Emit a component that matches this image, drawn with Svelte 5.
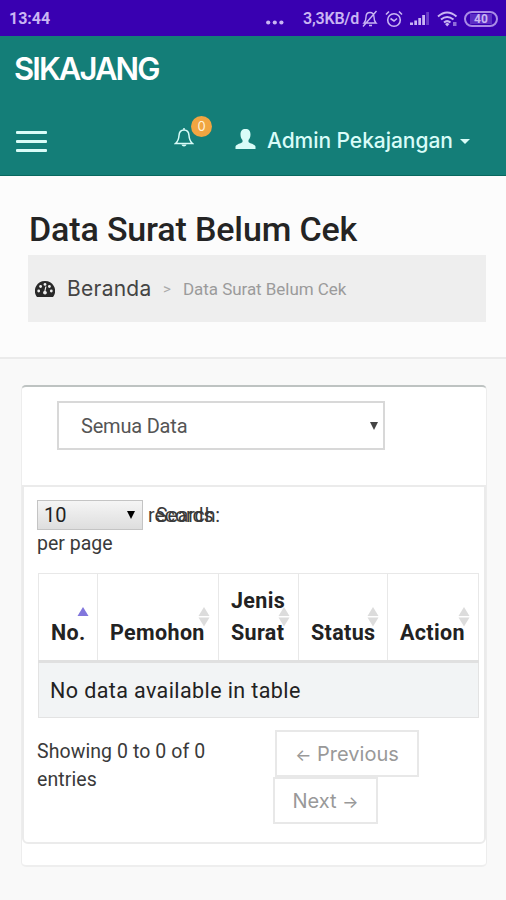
<script lang="ts">
  type Column = { label: string; width: number; sorted?: boolean };

  const columns: Column[] = [
    { label: 'No.', width: 59, sorted: true },
    { label: 'Pemohon', width: 121 },
    { label: 'Jenis Surat', width: 80 },
    { label: 'Status', width: 89 },
    { label: 'Action', width: 91 }
  ];
</script>

<div class="screen">
  <div class="status-bar">
    <span class="clock">13:44</span>
    <svg class="more" width="18" height="5" viewBox="0 0 18 5" fill="currentColor">
      <circle cx="2.2" cy="2.5" r="2.1" /><circle cx="8.8" cy="2.5" r="2.1" /><circle cx="15.4" cy="2.5" r="2.1" />
    </svg>
    <span class="rate">3,3KB/d</span>
    <svg class="muted" width="16" height="18" viewBox="0 0 16 18" fill="none" stroke="currentColor" stroke-width="1.4">
      <path d="M2 13h12c-2-2-2-4-2-6 0-3-1.500-4.500-4-4.500S4 4 4 7c0 2 0 4-2 6zM7 15.500h3M1 16.500 14.500 1" />
    </svg>
    <svg class="alarm" width="18" height="18" viewBox="0 0 18 18" fill="none" stroke="currentColor" stroke-width="1.6">
      <circle cx="9" cy="10" r="6.300" /><path d="M5.500 8.500 9 11l3-2.500M1 4.500 4 1.500M17 4.500l-3-3" />
    </svg>
    <svg class="signal" width="19" height="14" viewBox="0 0 19 14" fill="currentColor">
      <path d="M0 10.500h3V13H0zM4.300 8.500H7V13H4.300zM8.300 6H11v7H8.300zM12.200 3H15v10h-2.800z" />
      <path d="M16.200 0H19v13h-2.800z" opacity=".35" />
    </svg>
    <svg class="wifi" width="21" height="16" viewBox="0 0 21 16" fill="none" stroke="currentColor" stroke-width="2">
      <path d="M1 5.500Q10-2.500 19.500 5.500M4 8.500q6-5 12.500 0M7 11.500q3-2.700 6.500 0" />
      <path d="m8 13 2.200-1.200L12.500 13l-2.300 2.500z" fill="currentColor" stroke="none" />
      <path d="M16 11h3.500v4H16z" fill="currentColor" stroke="none" opacity=".6" />
    </svg>
    <span class="battery"><span>40</span></span>
  </div>

  <header class="app-header">
    <div class="brand">SIKAJANG</div>
    <nav class="navbar">
      <button class="menu" type="button" aria-label="Menu"><i></i><i></i><i></i></button>
      <button class="bell" type="button" aria-label="Notifikasi">
        <svg width="20" height="21" viewBox="0 0 20 21" fill="none" stroke="currentColor" stroke-width="1.500">
          <path d="M10 1v2M1.500 16.500h17C15.500 14 15.200 11.500 15 8.500 14.800 5 13.200 3 10 3S5.200 5 5 8.500c-.2 3-.5 5.500-3.500 8z" />
          <path d="M7.500 17.500h5c-.4 2.500-4.600 2.500-5 0z" fill="currentColor" stroke="none" />
        </svg>
        <span class="badge">0</span>
      </button>
      <svg class="user" width="21" height="21" viewBox="0 0 21 21" fill="currentColor">
        <path d="M10.500 0c3.500 0 5 2 5 5.500 0 2.300-.8 4.300-2 5.500v2c1 1.300 6.500 2.200 7 4.500V20H.5v-2.500C1 15.200 6.500 14.300 7.500 13v-2c-1.200-1.200-2-3.200-2-5.500 0-3.500 1.500-5.500 5-5.500z" />
      </svg>
      <span class="account">Admin Pekajangan</span>
      <span class="caret"></span>
    </nav>
  </header>

  <section class="page-head">
    <h1>Data Surat Belum Cek</h1>
    <div class="breadcrumb">
      <svg width="20" height="16" viewBox="0 0 20 16">
        <path d="M10 0a10 10 0 0 0-8.600 15.200l.7.800h15.800l.7-.8A10 10 0 0 0 10 0z" fill="#292929" />
        <g fill="#eee">
          <circle cx="3.700" cy="10" r="1.400" /><circle cx="5.600" cy="5.500" r="1.400" />
          <circle cx="10" cy="3.400" r="1.400" /><circle cx="14.400" cy="5.500" r="1.400" /><circle cx="16.300" cy="10" r="1.400" />
          <path d="m11.500 5.500-1 4.500c1.800.6 2 3.200-.4 3.400-2.400-.1-2.600-2.800-.8-3.500l1-4.500z" />
        </g>
      </svg>
      <a href="#beranda">Beranda</a>
      <span class="divider">&gt;</span>
      <span class="current">Data Surat Belum Cek</span>
    </div>
  </section>

  <main class="box">
    <div class="filter">
      <div class="select select-large"><span>Semua Data</span><i class="arrow"></i></div>
    </div>

    <div class="panel">
      <div class="table-tools">
        <div class="length">
          <div class="select select-small"><span>10</span><i class="arrow"></i></div>
          <span class="records">records<b class="search">Search:</b></span>
        </div>
        <div class="per-page">per page</div>
      </div>

      <table>
        <colgroup>
          {#each columns as column}
            <col style={`width: ${column.width}px`} />
          {/each}
        </colgroup>
        <thead>
          <tr>
            {#each columns as column}
              <th>
                <svg class="sort" class:sorted={column.sorted} width="12" height="20" viewBox="0 0 12 20">
                  <path d="M6 0l5.500 9H.5z" />
                  {#if !column.sorted}<path d="M.5 10.500h11L6 19.500z" />{/if}
                </svg>
                <span class="label">{column.label}</span>
              </th>
            {/each}
          </tr>
        </thead>
        <tbody>
          <tr><td colspan="5">No data available in table</td></tr>
        </tbody>
      </table>

      <div class="table-foot">
        <div class="info">Showing 0 to 0 of 0 entries</div>
        <div class="pager">
          <button class="previous" type="button"><span class="glyph">←</span> Previous</button>
          <button class="next" type="button">Next <span class="glyph">→</span></button>
        </div>
      </div>
    </div>
  </main>
</div>

<style>
  :global(body) {
    margin: 0;
    background: #f9f9f9;
  }

  .screen {
    width: 506px;
    height: 900px;
    overflow: hidden;
    background: #f9f9f9;
    color: #3a3a3a;
    font-family: Roboto, sans-serif;
  }

  .screen * {
    box-sizing: border-box;
  }

  button {
    padding: 0;
    border: 0;
    background: none;
    color: inherit;
    font: inherit;
  }

  svg {
    display: block;
    flex: none;
  }

  .status-bar {
    display: flex;
    align-items: center;
    height: 36px;
    padding: 1px 8px 0 9px;
    background: #3900b1;
    color: #c9b5f3;
    font-size: 16px;
    font-weight: 700;
  }

  .clock {
    flex: none;
    width: 257px;
  }

  .more {
    margin-top: 7px;
  }

  .rate {
    flex: none;
    width: 56px;
    margin-left: 19px;
    font-weight: 600;
    letter-spacing: -0.2px;
    white-space: nowrap;
  }

  .muted {
    margin-left: 3px;
  }

  .alarm {
    margin-left: 7px;
  }

  .signal {
    margin-left: 7px;
  }

  .wifi {
    margin-left: 8px;
  }

  .battery {
    display: flex;
    flex: none;
    align-items: center;
    justify-content: center;
    width: 34px;
    height: 16px;
    margin-left: 6px;
    border: 2px solid #a98be6;
    border-radius: 8px;
    font-size: 12px;
  }

  .battery span {
    padding: 0 4px;
    background: #5c2dc4;
    line-height: 10px;
  }

  .app-header {
    height: 140px;
    border-bottom: 1px solid #08685f;
    background: #147e78;
    color: #d9fcf8;
  }

  .brand {
    height: 69px;
    padding: 14px 0 0 14px;
    color: #fff;
    font-family: Inter, sans-serif;
    font-size: 31px;
    font-weight: 600;
    line-height: 37px;
    letter-spacing: -1.9px;
  }

  .navbar {
    display: flex;
    align-items: center;
    height: 70px;
    padding-left: 16px;
  }

  .menu {
    display: grid;
    gap: 6px;
    width: 31px;
    margin-top: 2px;
  }

  .menu i {
    height: 3px;
    border-radius: 1px;
    background: #d9fcf8;
  }

  .bell {
    position: relative;
    margin: -6px 0 0 127px;
  }

  .badge {
    position: absolute;
    top: -11px;
    left: 17px;
    width: 21px;
    height: 21px;
    border-radius: 50%;
    background: #f1a541;
    color: #fff2d6;
    font-family: Inter, sans-serif;
    font-size: 13px;
    line-height: 21px;
  }

  .user {
    margin: -1px 0 0 41px;
  }

  .account {
    width: 186px;
    margin-left: 11px;
    font-family: Inter, sans-serif;
    font-size: 21px;
    font-weight: 500;
    letter-spacing: -0.05px;
    white-space: nowrap;
  }

  .caret {
    margin: 2px 0 0 7px;
    border: 5px solid transparent;
    border-top-color: #d9fcf8;
    border-bottom: 0;
  }

  .page-head {
    height: 183px;
    padding: 32px 20px 0 28px;
    border-bottom: 2px solid #ebebeb;
    background: #fcfcfc;
  }

  h1 {
    margin: 0 0 4px 1px;
    color: #242424;
    font-size: 34px;
    font-weight: 500;
    line-height: 43px;
    letter-spacing: -0.15px;
    white-space: nowrap;
  }

  .breadcrumb {
    display: flex;
    align-items: center;
    height: 67px;
    padding-left: 7px;
    background: #eee;
  }

  .breadcrumb a {
    width: 85px;
    margin-left: 12px;
    color: #444;
    font-family: Inter, sans-serif;
    font-size: 21px;
    letter-spacing: 0.25px;
    text-decoration: none;
  }

  .divider {
    width: 19px;
    margin-left: 11px;
    color: #aaa;
    font-size: 15px;
  }

  .current {
    margin-left: 1px;
    color: #9b9b9b;
    font-size: 17px;
    letter-spacing: -0.05px;
    white-space: nowrap;
  }

  .box {
    width: 466px;
    height: 482px;
    margin: 26px 0 0 21px;
    border: 1px solid #ededed;
    border-top: 2px solid #bec3c2;
    border-bottom: 2px solid #eee;
    border-radius: 5px;
    background: #fff;
  }

  .filter {
    height: 98px;
    padding: 14px 0 0 35px;
  }

  .select {
    display: flex;
    align-items: center;
    justify-content: space-between;
    border: 2px solid #d8d8d8;
  }

  .select-large {
    width: 328px;
    height: 49px;
    padding: 0 5px 0 22px;
    color: #555;
    font-size: 20px;
    letter-spacing: -0.2px;
  }

  .arrow {
    border: 4.500px solid transparent;
    border-top: 8px solid #444;
    border-bottom: 0;
  }

  .panel {
    height: 359px;
    padding: 13px 6px 0 14px;
    border: 2px solid #ebebeb;
    border-radius: 0 0 6px 6px;
  }

  .table-tools {
    height: 73px;
    font-size: 19.500px;
  }

  .length {
    display: flex;
    align-items: center;
    height: 30px;
    margin-left: -1px;
  }

  .select-small {
    width: 106px;
    height: 30px;
    padding: 0 7px 0 6px;
    border: 1px solid #c4c4c4;
    background: linear-gradient(#f5f5f5, #dedede);
    color: #222;
    font-size: 20px;
  }

  .select-small .arrow {
    border-top-color: #000;
  }

  .records {
    position: relative;
    margin-left: 5px;
  }

  .search {
    position: absolute;
    top: 0;
    left: 8px;
    font-weight: 400;
    letter-spacing: -0.1px;
  }

  .per-page {
    margin: 1px 0 0 -1px;
    line-height: 26px;
  }

  table {
    width: 440px;
    border: 1px solid #e3e3e3;
    border-collapse: collapse;
    table-layout: fixed;
    color: #222;
    font-size: 21.500px;
  }

  th {
    position: relative;
    height: 88px;
    padding: 11px 6px 11px 12px;
    border: 1px solid #e8e8e8;
    border-bottom: 3px solid #e0e0e0;
    font-weight: 700;
    line-height: 32px;
    text-align: left;
    vertical-align: bottom;
  }

  .label {
    position: relative;
    letter-spacing: 0.35px;
  }

  .sort {
    position: absolute;
    top: 33px;
    right: 8px;
    fill: #dcdcdc;
  }

  .sort.sorted {
    fill: #8176dc;
  }

  td {
    height: 56px;
    padding: 0 11px;
    background: #f2f4f5;
    letter-spacing: 0.4px;
  }

  .table-foot {
    display: flex;
    padding-top: 12px;
  }

  .info {
    width: 238px;
    padding: 8px 60px 0 0;
    margin-left: -1px;
    font-size: 19.500px;
    line-height: 28px;
    letter-spacing: 0.08px;
  }

  .pager {
    color: #999;
    font-family: Inter, sans-serif;
    font-size: 20px;
  }

  .pager button {
    display: block;
    height: 47px;
    border: 2px solid #e8e8e8;
    white-space: nowrap;
  }

  .previous {
    width: 144px;
  }

  .next {
    width: 105px;
    margin-left: -2px;
  }

  .glyph {
    font-size: 17px;
  }
</style>
